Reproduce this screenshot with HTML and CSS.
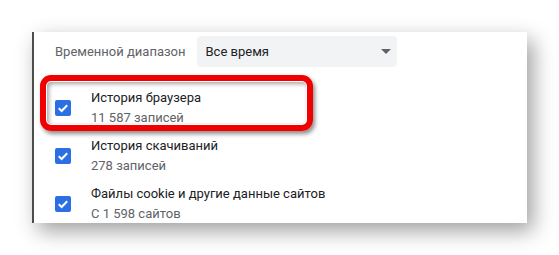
FILE: index.html
```html
<!DOCTYPE html>
<html lang="ru">
<head>
<meta charset="utf-8">
<link rel="stylesheet" href="styles.css">
</head>
<body>
<div class="stage">
  <div class="panel">
    <div class="range">
      <span class="range-label">Временной диапазон</span>
      <div class="select">
        <span>Все время</span>
        <span class="arrow"></span>
      </div>
    </div>
    <div class="row">
      <span class="cb"><svg viewBox="0 0 16 16" width="16" height="16"><path d="M3.8 8.2l2.8 2.8 5.6-5.8" fill="none" stroke="#fff" stroke-width="2"/></svg></span>
      <div class="text"><div class="title">История браузера</div><div class="sub">11 587 записей</div></div>
    </div>
    <div class="row">
      <span class="cb"><svg viewBox="0 0 16 16" width="16" height="16"><path d="M3.8 8.2l2.8 2.8 5.6-5.8" fill="none" stroke="#fff" stroke-width="2"/></svg></span>
      <div class="text"><div class="title">История скачиваний</div><div class="sub">278 записей</div></div>
    </div>
    <div class="row">
      <span class="cb"><svg viewBox="0 0 16 16" width="16" height="16"><path d="M3.8 8.2l2.8 2.8 5.6-5.8" fill="none" stroke="#fff" stroke-width="2"/></svg></span>
      <div class="text"><div class="title">Файлы cookie и другие данные сайтов</div><div class="sub">С 1 598 сайтов</div></div>
    </div>
    <div class="highlight"></div>
  </div>
</div>
</body>
</html>
```
FILE: styles.css
```css
html, body {
  margin: 0;
  padding: 0;
  background: #fff;
}
body {
  font-family: Roboto, "Liberation Sans", sans-serif;
  font-size: 13px;
  width: 559px;
  height: 255px;
  overflow: hidden;
}
.stage {
  padding: 32px 0 0 32px;
}
.panel {
  position: relative;
  width: 493px;
  height: 191px;
  background: #fff;
  border-left: 2px solid #4d4d4d;
  box-shadow: 6px 8px 20px rgba(0, 0, 0, 0.38);
  overflow: hidden;
}
.range {
  display: flex;
  align-items: center;
  padding: 4px 0 0 21px;
  gap: 12px;
}
.range-label {
  color: #5f6368;
  line-height: 20px;
}
.select {
  width: 192px;
  height: 31px;
  padding-left: 8px;
  background: #f1f3f4;
  border-radius: 4px;
  display: flex;
  align-items: center;
  justify-content: space-between;
  color: #202124;
}
.arrow {
  width: 0;
  height: 0;
  border-left: 5px solid transparent;
  border-right: 5px solid transparent;
  border-top: 5px solid #5f6368;
  margin-right: 6px;
}
.row {
  display: flex;
  align-items: center;
  gap: 20px;
  padding-left: 21px;
  margin-top: 8px;
}
.range + .row {
  margin-top: 21px;
}
.cb {
  width: 16px;
  height: 16px;
  background: #2a70e4;
  border-radius: 2px;
  display: flex;
}
.text {
  line-height: 20px;
}
.title {
  color: #202124;
}
.sub {
  color: #5f6368;
}
.highlight {
  position: absolute;
  left: 6px;
  top: 43px;
  width: 261px;
  height: 44px;
  border: 6px solid #f00000;
  border-radius: 11px;
  box-shadow: 2px 3px 4px rgba(0, 0, 0, 0.45), inset 0 0 0 1px #fff, inset 2px 2px 4px 1px rgba(0, 0, 0, 0.35);
}
```
